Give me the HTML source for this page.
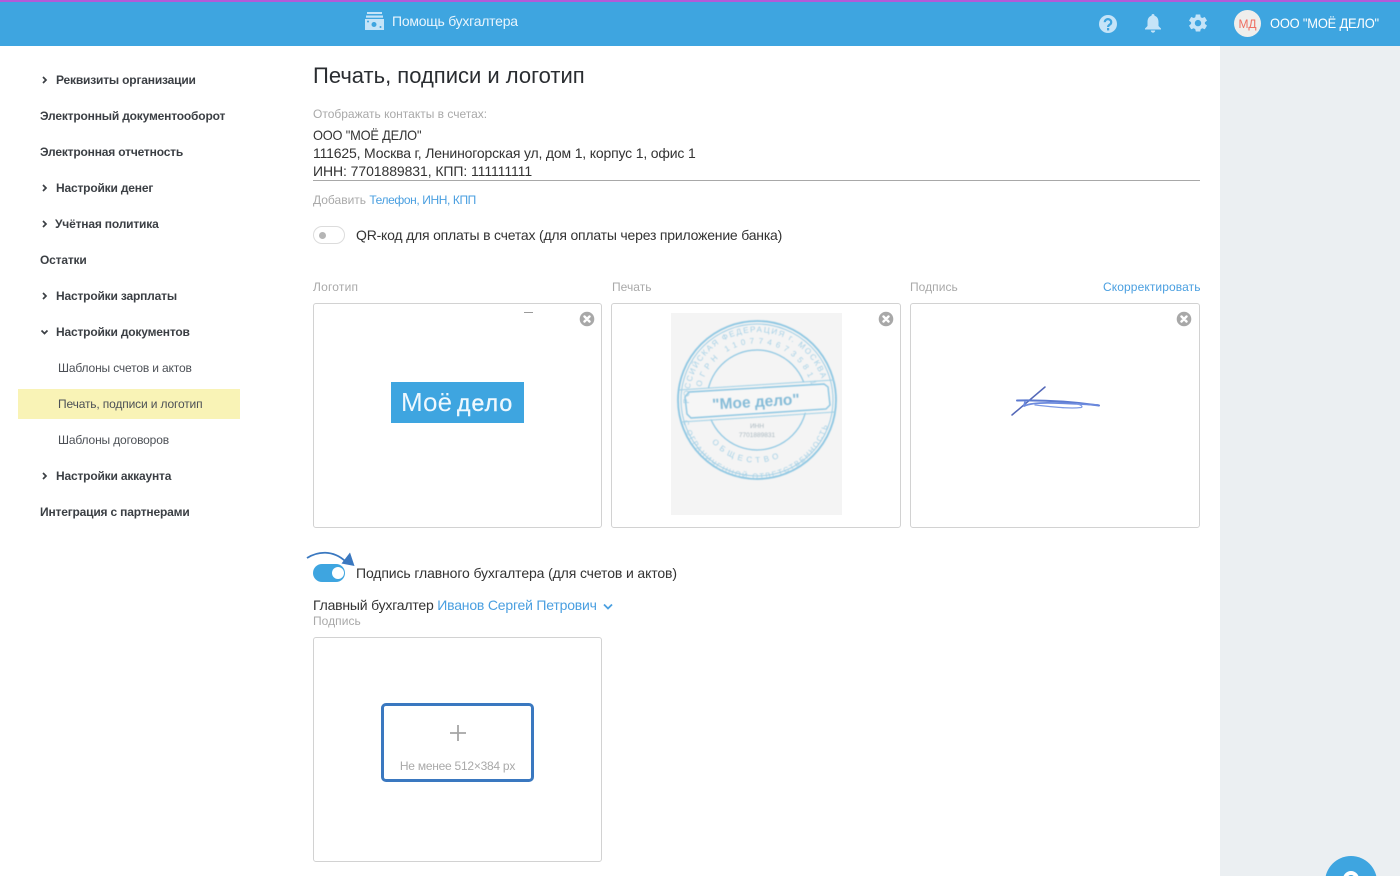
<!DOCTYPE html>
<html lang="ru"><head><meta charset="utf-8"><title>Печать, подписи и логотип</title>
<style>
html,body{margin:0;padding:0;width:1400px;height:876px;overflow:hidden;background:#fff}
body{position:relative;font-family:"Liberation Sans",sans-serif;color:#333}
.t{position:absolute;white-space:nowrap;line-height:18px}
.abs{position:absolute}
.s{font-size:12px;font-weight:700;color:#3b3f44;letter-spacing:-.18px}
.n{font-size:12px;color:#4c5056;letter-spacing:-.15px}
.g{font-size:12px;color:#a9a9a9}
.d{font-size:14px;color:#333;letter-spacing:-.2px}
.l{color:#4a9fe0}
.box{position:absolute;box-sizing:border-box;border:1px solid #d2d2d2;border-radius:3px;background:#fff}
svg{position:absolute;overflow:visible}
</style></head><body>
<div class="abs" style="left:1220px;top:46px;width:180px;height:830px;background:#ebeff2"></div>
<div class="abs" style="left:0;top:0;width:1400px;height:46px;background:#3ea5e0"></div>
<div class="abs" style="left:0;top:0;width:1400px;height:2px;background:#b35ad8"></div>

<svg style="left:365px;top:12px" width="19" height="19" viewBox="0 0 19 19"><g fill="#c5e4f8"><rect x="2" y="0" width="15" height="2"/><rect x="1" y="3.500" width="17" height="2.200"/><path d="M0 7h19v11H0z"/></g><circle cx="9" cy="12.500" r="2.500" fill="#3ea5e0"/><circle cx="15.500" cy="15" r="1" fill="#3ea5e0"/><circle cx="3" cy="9.500" r="1" fill="#3ea5e0"/></svg>
<div class="t" style="left:392px;top:12px;font-size:14px;color:#e9f5fd;letter-spacing:-.25px">Помощь бухгалтера</div>

<svg style="left:1099px;top:15px" width="18" height="18" viewBox="0 0 18 18"><circle cx="9" cy="9" r="9" fill="#c5e4f8"/><path d="M5.800 7.200a3.200 3 0 1 1 5 2.400c-1.200.8-1.700 1.200-1.700 2.400" fill="none" stroke="#3ea5e0" stroke-width="2.200"/><rect x="8" y="13" width="2.200" height="2.400" fill="#3ea5e0"/></svg>
<svg style="left:1145px;top:14px" width="16" height="19" viewBox="0 0 16 19"><path d="M8 0a1.500 1.500 0 0 1 1.500 1.800C12.200 2.500 13.500 5 13.500 8v4l2.500 2.500V15.500H0v-1L2.500 12V8c0-3 1.300-5.500 4-6.200A1.500 1.500 0 0 1 8 0zM5.800 16.500h4.400a2.200 2.200 0 0 1-4.400 0z" fill="#c5e4f8"/></svg>
<svg style="left:1189px;top:14px" width="18" height="19" viewBox="0 0 18 19"><path d="M6.800 0h4.400l.5 2.700 1.500.8 2.600-1 2.200 3.600-2.100 1.700v1.600l2.100 1.700-2.200 3.700-2.600-1-1.500.9-.5 2.300H6.800l-.5-2.300-1.500-.9-2.600 1L0 11.100l2.100-1.700V7.800L0 6.100l2.200-3.600 2.600 1 1.500-.8z" fill="#c5e4f8" transform="translate(0 .5)"/><circle cx="9" cy="9.100" r="3.200" fill="#3ea5e0"/></svg>

<div class="abs" style="left:1234px;top:10px;width:27px;height:27px;border-radius:50%;background:#efeeec"></div>
<div class="t" style="left:1234px;top:15px;width:27px;text-align:center;font-size:12px;color:#ee6f62">МД</div>
<div class="t" style="left:1270px;top:14px;font-size:14px;color:#fff;letter-spacing:-.2px;transform:scaleX(.92);transform-origin:0 0">ООО "МОЁ ДЕЛО"</div>

<!-- sidebar -->
<div class="abs" style="left:18px;top:389px;width:222px;height:30px;background:#f9f3b6"></div>
<svg style="left:0;top:0" width="60" height="490" viewBox="0 0 60 490"><g fill="none" stroke="#3b3f44" stroke-width="1.700">
<path d="M43 77l3 3-3 3M43 185l3 3-3 3M43 221l3 3-3 3M43 293l3 3-3 3M43 473l3 3-3 3M41.500 330.500l3 3 3-3"/></g></svg>
<div class="t s" style="left:56px;top:71px">Реквизиты организации</div>
<div class="t s" style="left:40px;top:107px">Электронный документооборот</div>
<div class="t s" style="left:40px;top:143px">Электронная отчетность</div>
<div class="t s" style="left:56px;top:179px">Настройки денег</div>
<div class="t s" style="left:55px;top:215px">Учётная политика</div>
<div class="t s" style="left:40px;top:251px">Остатки</div>
<div class="t s" style="left:56px;top:287px">Настройки зарплаты</div>
<div class="t s" style="left:56px;top:323px">Настройки документов</div>
<div class="t n" style="left:58px;top:359px">Шаблоны счетов и актов</div>
<div class="t n" style="left:58px;top:395px">Печать, подписи и логотип</div>
<div class="t n" style="left:58px;top:431px">Шаблоны договоров</div>
<div class="t s" style="left:56px;top:467px">Настройки аккаунта</div>
<div class="t s" style="left:40px;top:503px">Интеграция с партнерами</div>

<!-- main -->
<div class="t" style="left:313px;top:62px;font-size:22px;line-height:28px;color:#2a2d31;letter-spacing:0">Печать, подписи и логотип</div>
<div class="t g" style="left:313px;top:105px;letter-spacing:0">Отображать контакты в счетах:</div>
<div class="t d" style="left:313px;top:126px;transform:scaleX(.915);transform-origin:0 0">ООО "МОЁ ДЕЛО"</div>
<div class="t d" style="left:313px;top:144px;letter-spacing:-.17px">111625, Москва г, Лениногорская ул, дом 1, корпус 1, офис 1</div>
<div class="t d" style="left:313px;top:162px;letter-spacing:-.08px">ИНН: 7701889831, КПП: 111111111</div>
<div class="abs" style="left:313px;top:180px;width:887px;height:1px;background:#a8a8a8"></div>
<div class="t g" style="left:313px;top:191px;letter-spacing:0">Добавить <span class="l" style="letter-spacing:-.4px">Телефон, ИНН, КПП</span></div>

<div class="abs" style="left:313px;top:226px;width:32px;height:18px;box-sizing:border-box;border:1px solid #dcdcdc;border-radius:9px;background:#fff"></div>
<div class="abs" style="left:319px;top:232px;width:7px;height:7px;border-radius:50%;background:#b5b5b5"></div>
<div class="t d" style="left:356px;top:226px">QR-код для оплаты в счетах (для оплаты через приложение банка)</div>

<div class="t g" style="left:313px;top:278px;letter-spacing:.2px">Логотип</div>
<div class="t g" style="left:612px;top:278px;letter-spacing:.05px">Печать</div>
<div class="t g" style="left:910px;top:278px;letter-spacing:.05px">Подпись</div>
<div class="t l" style="left:1103px;top:278px;font-size:12px;letter-spacing:.1px">Скорректировать</div>

<div class="box" style="left:313px;top:303px;width:289px;height:225px"></div>
<div class="box" style="left:611px;top:303px;width:290px;height:225px"></div>
<div class="box" style="left:910px;top:303px;width:290px;height:225px"></div>

<!-- logo -->
<div class="abs" style="left:524px;top:312px;width:9px;height:1px;background:#9a9a9a"></div>
<div class="abs" style="left:391px;top:382px;width:133px;height:41px;background:#3ea5e0"></div>
<div class="t" style="left:401px;top:388px;font-size:26px;line-height:28px;color:#eef8fe;letter-spacing:.1px">Моё</div>
<div class="t" style="left:457px;top:389px;font-size:23px;line-height:28px;color:#eef8fe;letter-spacing:1.100px;-webkit-text-stroke:.4px #eef8fe">дело</div>

<!-- stamp -->
<div class="abs" style="left:671px;top:313px;width:171px;height:202px;background:#f4f4f4"></div>
<svg style="left:671px;top:313px;filter:blur(.45px)" width="171" height="202" viewBox="0 0 171 202">
<defs>
<path id="a1" d="M18 87a68 68 0 0 1 136 0" fill="none"/>
<path id="a2" d="M29 80a57 57 0 0 1 113 0" fill="none"/>
<path id="a3" d="M12 108a75 75 0 0 0 146 0" fill="none"/>
<path id="a4" d="M30 110a58 58 0 0 0 110 0" fill="none"/>
</defs>
<g fill="none" stroke="#8cc6e2">
<circle cx="86" cy="87" r="79" stroke-width="1.800"/>
<circle cx="86" cy="87" r="76" stroke-width=".8"/>
<circle cx="86" cy="87" r="50" stroke-width="1.200"/>
</g>
<path d="M13 77L157 68 160 98 16 108z" fill="#f4f4f4"/>
<path d="M18 79L153 71l4 3 2 18-4 4L20 105l-4-4-2-17z" fill="#f6f6f6" stroke="#8cc6e2" stroke-width="1.400"/>
<path d="M8 77L163 67M10 109L164 99" stroke="#9fd0e6" stroke-width="1"/>
<g font-family="Liberation Sans,sans-serif" fill="#a4d0e6">
<text font-size="8" transform="rotate(-3 86 87)"><textPath href="#a1" textLength="195">РОССИЙСКАЯ ФЕДЕРАЦИЯ г. МОСКВА</textPath></text>
<text font-size="8" transform="rotate(6 86 87)"><textPath href="#a2" textLength="150">ОГРН 1107746735811</textPath></text>
<text font-size="7.500"><textPath href="#a3" textLength="205">С ОГРАНИЧЕННОЙ ОТВЕТСТВЕННОСТЬЮ</textPath></text>
<text font-size="8" letter-spacing="4"><textPath href="#a4" startOffset="22">ОБЩЕСТВО</textPath></text>
<text x="85" y="94" font-size="15.500" font-weight="700" text-anchor="middle" fill="#86bcd8" transform="rotate(-3.500 84 90)">"Мое дело"</text>
<text x="86" y="115" font-size="6.500" text-anchor="middle" fill="#aab8c0">ИНН</text>
<text x="86" y="124" font-size="6.500" text-anchor="middle" fill="#aab8c0">7701889831</text>
</g>
</svg>

<!-- signature -->
<svg style="left:1005px;top:380px;filter:blur(.3px)" width="100" height="40" viewBox="0 0 100 40"><g fill="none" stroke-linecap="round">
<path d="M7 35L40 7" stroke="#5468b8" stroke-width="1.500"/>
<path d="M12 20.500C40 20 70 22 94 25.500" stroke="#5c7ad0" stroke-width="2"/>
<path d="M19 26C30 21 55 23 93 25M19 26l1-4" stroke="#6c8ade" stroke-width="1.800"/>
<path d="M30 25C50 27 65 29 76 27.500 78 27 77 25 72 24" stroke="#7f9be4" stroke-width="1.300"/>
</g></svg>

<!-- close icons -->
<svg style="left:0;top:0" width="1400" height="340" viewBox="0 0 1400 340"><g>
<circle cx="587" cy="319" r="7.300" fill="#a8a8a8"/><circle cx="886" cy="319" r="7.300" fill="#a8a8a8"/><circle cx="1184" cy="319" r="7.300" fill="#a8a8a8"/>
<path d="M584.500 316.500l5 5m0-5l-5 5M883.500 316.500l5 5m0-5l-5 5M1181.500 316.500l5 5m0-5l-5 5" stroke="#fff" stroke-width="2.400" stroke-linecap="round"/></g></svg>

<!-- switch -->
<div class="abs" style="left:313px;top:564px;width:32px;height:18px;border-radius:9px;background:#3ea5e0"></div>
<div class="abs" style="left:332px;top:567px;width:12px;height:12px;border-radius:50%;background:#fff"></div>
<svg style="left:300px;top:545px" width="60" height="25" viewBox="0 0 60 25"><path d="M7 13C18 6 33 5 45 16" fill="none" stroke="#3a78c0" stroke-width="1.800"/><path d="M50 7.500L54.500 21 41.500 18.500z" fill="#3a78c0"/></svg>
<div class="t d" style="left:356px;top:564px;letter-spacing:-.12px">Подпись главного бухгалтера (для счетов и актов)</div>
<div class="t d" style="left:313px;top:596px">Главный бухгалтер <span class="l">Иванов Сергей Петрович</span></div>
<svg style="left:603px;top:603px" width="10" height="7" viewBox="0 0 10 7"><path d="M1 1.500l4 4 4-4" fill="none" stroke="#4a9fe0" stroke-width="1.800"/></svg>
<div class="t g" style="left:313px;top:612px;letter-spacing:.05px">Подпись</div>

<div class="box" style="left:313px;top:637px;width:289px;height:225px"></div>
<div class="abs" style="left:381px;top:703px;width:153px;height:79px;box-sizing:border-box;border:3px solid #3a78c0;border-radius:5px;background:#fff"></div>
<svg style="left:450px;top:725px" width="16" height="16" viewBox="0 0 16 16"><path d="M8 0v16M0 8h16" stroke="#a5a5a5" stroke-width="1.800"/></svg>
<div class="t g" style="left:381px;top:757px;width:153px;text-align:center;letter-spacing:-.25px">Не менее 512×384 px</div>

<!-- help button -->
<div class="abs" style="left:1325px;top:856px;width:52px;height:52px;border-radius:50%;background:#3ea5e0"></div>
<div class="abs" style="left:1343px;top:871px;width:16px;height:16px;box-sizing:border-box;border:4px solid #fff;border-radius:50%"></div>
</body></html>
